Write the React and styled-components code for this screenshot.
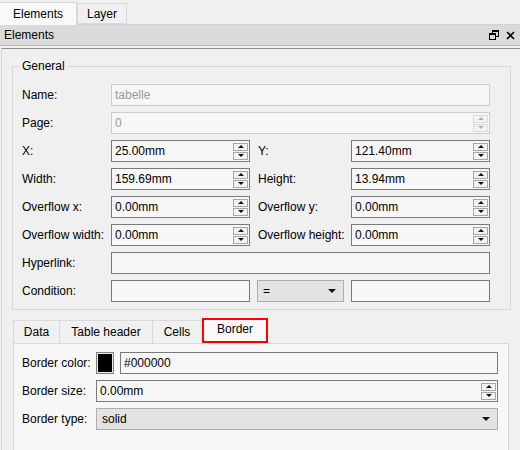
import React from "react";
import styled, { createGlobalStyle } from "styled-components";

const GlobalStyle = createGlobalStyle`
  html, body {
    margin: 0;
    padding: 0;
    background: #f0f0f0;
  }
  body {
    font-family: "Liberation Sans", Arial, sans-serif;
    font-size: 12px;
    color: #000;
  }
`;

const Window = styled.div`
  width: 520px;
  height: 450px;
  display: flex;
  flex-direction: column;
  overflow: hidden;
  background: #f0f0f0;
`;

const TopTabs = styled.div`
  display: flex;
  align-items: flex-end;
  height: 24px;
  border-bottom: 1px solid #d2d2d2;
`;

const TopTab = styled.div`
  width: ${({ $w }) => $w}px;
  height: ${({ $active }) => ($active ? 23 : 21)}px;
  margin-bottom: ${({ $active }) => ($active ? -1 : 0)}px;
  box-sizing: border-box;
  display: flex;
  align-items: center;
  justify-content: center;
  background: ${({ $active }) => ($active ? "#f9f9f9" : "#f0f0f0")};
  border: 1px solid #d9d9d9;
  border-bottom: ${({ $active }) => ($active ? "none" : "1px solid #d9d9d9")};
  border-left: ${({ $active }) => ($active ? "none" : "1px solid #d9d9d9")};
`;

const DockTitle = styled.div`
  height: 20px;
  display: flex;
  align-items: center;
  justify-content: space-between;
  padding: 0 5px 0 4px;
  background: #dadada;
  border-bottom: 1px solid #b8b8b8;
`;

const TitleIcons = styled.div`
  display: flex;
  align-items: center;
  gap: 7px;
`;

const DockBody = styled.div`
  flex: 1;
  margin-top: 2px;
  margin-left: 1px;
  border-top: 1px solid #8c9099;
  border-left: 1px solid #d8d8d8;
  padding: 10px 9px 0 10px;
  display: flex;
  flex-direction: column;
  min-height: 0;
`;

const Group = styled.fieldset`
  margin: 0;
  border: 1px solid #d8d8d8;
  padding: 11px 19px 7px 9px;
  display: grid;
  grid-template-columns: 89px 139px 101px 139px;
  grid-auto-rows: 22px;
  row-gap: 6px;
  align-items: center;
`;

const Legend = styled.legend`
  padding: 0 3px;
  margin-left: -3px;
  line-height: 14px;
`;

const Label = styled.div`
  padding-left: ${({ $indent }) => ($indent ? 8 : 0)}px;
  white-space: nowrap;
`;

const Field = styled.div`
  grid-column: ${({ $span }) => ($span ? `span ${$span}` : "auto")};
  height: 22px;
  box-sizing: border-box;
  display: flex;
  align-items: center;
  padding: 0 1px 0 3px;
  background: #f7f7f7;
  border: 1px solid ${({ $disabled }) => ($disabled ? "#cccccc" : "#7a7a7a")};
  color: ${({ $disabled }) => ($disabled ? "#9a9a9a" : "#000")};
`;

const FieldText = styled.span`
  flex: 1;
  white-space: nowrap;
`;

const Spin = styled.div`
  width: 15px;
  height: 20px;
  display: flex;
  flex-direction: column;
  justify-content: center;
  gap: 1px;
`;

const SpinHalf = styled.div`
  height: 8px;
  box-sizing: border-box;
  border: 1px solid ${({ $disabled }) => ($disabled ? "#dadada" : "#a6a6a6")};
  background: #f3f3f3;
  display: flex;
  align-items: center;
  justify-content: center;
  &::after {
    content: "";
    border-left: 3px solid transparent;
    border-right: 3px solid transparent;
    ${({ $down, $disabled }) =>
      $down
        ? `border-top: 3px solid ${$disabled ? "#b4b4b4" : "#111"};`
        : `border-bottom: 3px solid ${$disabled ? "#b4b4b4" : "#111"};`}
  }
`;

const Combo = styled.div`
  height: 22px;
  box-sizing: border-box;
  margin: 0 ${({ $inset }) => ($inset ? "7px" : "0")};
  display: flex;
  align-items: center;
  justify-content: space-between;
  padding: 0 7px 0 5px;
  background: #e3e3e3;
  border: 1px solid #adadad;
  &::after {
    content: "";
    border-left: 4px solid transparent;
    border-right: 4px solid transparent;
    border-top: 4px solid #111;
  }
`;

const InnerTabs = styled.div`
  display: flex;
  align-items: flex-end;
  height: 25px;
  margin: 8px 0 0 1px;
`;

const InnerTab = styled.div`
  width: ${({ $w }) => $w}px;
  height: ${({ $active }) => ($active ? 25 : 23)}px;
  box-sizing: border-box;
  display: flex;
  align-items: center;
  justify-content: center;
  background: ${({ $active }) => ($active ? "#f9f9f9" : "#f0f0f0")};
  border: ${({ $active }) => ($active ? "2px solid #ff0000" : "1px solid #d9d9d9")};
  border-bottom: ${({ $active }) => ($active ? "2px solid #ff0000" : "none")};
  border-left: ${({ $active, $first }) =>
    $active ? "2px solid #ff0000" : $first ? "1px solid #d9d9d9" : "none"};
  padding-bottom: ${({ $active }) => ($active ? 3 : 0)}px;
`;

const Pane = styled.div`
  flex: 1;
  margin: 0 2px 0 1px;
  border: 1px solid #d9d9d9;
  border-bottom: none;
  background: #f7f7f7;
  padding: 8px 10px 0 8px;
  display: grid;
  grid-template-columns: 74px 1fr;
  grid-auto-rows: 22px;
  row-gap: 6px;
  align-content: start;
  align-items: center;
`;

const ColorRow = styled.div`
  display: flex;
  gap: 6px;
  height: 22px;
`;

const Swatch = styled.div`
  width: 18px;
  height: 22px;
  box-sizing: border-box;
  border: 1px solid #7f7f7f;
  padding: 1px;
  background: #e8e8e8;
  &::after {
    content: "";
    display: block;
    width: 100%;
    height: 100%;
    background: #000;
  }
`;

const GrowField = styled(Field)`
  flex: 1;
`;

const SpinBox = ({ value, disabled, span }) => (
  <Field $disabled={disabled} $span={span}>
    <FieldText>{value}</FieldText>
    <Spin>
      <SpinHalf $disabled={disabled} />
      <SpinHalf $down $disabled={disabled} />
    </Spin>
  </Field>
);

const FloatIcon = () => (
  <svg width="10" height="10" viewBox="0 0 10 10">
    <rect x="3.5" y="0.5" width="6" height="6" fill="none" stroke="#000" />
    <rect x="3" y="0" width="7" height="2" fill="#000" />
    <rect x="0.5" y="3.5" width="6" height="6" fill="#dadada" stroke="#000" />
    <rect x="0" y="3" width="7" height="2" fill="#000" />
  </svg>
);

const CloseIcon = () => (
  <svg width="9" height="9" viewBox="0 0 9 9">
    <path d="M1 1 L8 8 M8 1 L1 8" stroke="#000" strokeWidth="1.6" />
  </svg>
);

export default function App() {
  return (
    <Window>
      <GlobalStyle />
      <TopTabs>
        <TopTab $active $w={77}>Elements</TopTab>
        <TopTab $w={50}>Layer</TopTab>
      </TopTabs>
      <DockTitle>
        <span>Elements</span>
        <TitleIcons>
          <FloatIcon />
          <CloseIcon />
        </TitleIcons>
      </DockTitle>
      <DockBody>
        <Group>
          <Legend>General</Legend>
          <Label>Name:</Label>
          <Field $disabled $span={3}>
            <FieldText>tabelle</FieldText>
          </Field>
          <Label>Page:</Label>
          <SpinBox value="0" disabled span={3} />
          <Label>X:</Label>
          <SpinBox value="25.00mm" />
          <Label $indent>Y:</Label>
          <SpinBox value="121.40mm" />
          <Label>Width:</Label>
          <SpinBox value="159.69mm" />
          <Label $indent>Height:</Label>
          <SpinBox value="13.94mm" />
          <Label>Overflow x:</Label>
          <SpinBox value="0.00mm" />
          <Label $indent>Overflow y:</Label>
          <SpinBox value="0.00mm" />
          <Label>Overflow width:</Label>
          <SpinBox value="0.00mm" />
          <Label $indent>Overflow height:</Label>
          <SpinBox value="0.00mm" />
          <Label>Hyperlink:</Label>
          <Field $span={3} />
          <Label>Condition:</Label>
          <Field />
          <Combo $inset>=</Combo>
          <Field />
        </Group>
        <InnerTabs>
          <InnerTab $first $w={47}>Data</InnerTab>
          <InnerTab $w={93}>Table header</InnerTab>
          <InnerTab $w={49}>Cells</InnerTab>
          <InnerTab $active $w={66}>Border</InnerTab>
        </InnerTabs>
        <Pane>
          <Label>Border color:</Label>
          <ColorRow>
            <Swatch />
            <GrowField>
              <FieldText>#000000</FieldText>
            </GrowField>
          </ColorRow>
          <Label>Border size:</Label>
          <SpinBox value="0.00mm" />
          <Label>Border type:</Label>
          <Combo>solid</Combo>
        </Pane>
      </DockBody>
    </Window>
  );
}
